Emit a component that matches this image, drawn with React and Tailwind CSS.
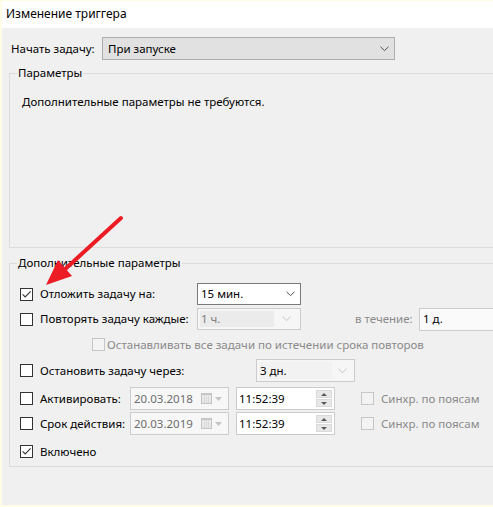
const font = { fontFamily: "'Noto Sans', 'DejaVu Sans', sans-serif" }

function Chevron({ disabled }) {
  return (
    <svg width="9" height="6" viewBox="0 0 9 6" className="shrink-0">
      <path
        d="M0.5 0.8 L4.5 4.6 L8.5 0.8"
        fill="none"
        stroke={disabled ? "#c4c4c4" : "#505050"}
        strokeWidth="1"
      />
    </svg>
  )
}

function Checkbox({ checked = false, disabled = false }) {
  return (
    <div
      className={
        disabled
          ? "w-[13px] h-[13px] shrink-0 border border-[#c6c6c6] bg-[#f3f3f3]"
          : "w-[13px] h-[13px] shrink-0 border border-[#333333] bg-white flex items-center justify-center"
      }
    >
      {checked && (
        <svg width="11" height="11" viewBox="0 0 11 11">
          <path
            d="M1.6 5.4 L4.2 8 L9.6 2.4"
            fill="none"
            stroke="#333333"
            strokeWidth="1.1"
          />
        </svg>
      )}
    </div>
  )
}

function CalendarIcon() {
  return (
    <div className="flex items-center gap-[3px] shrink-0">
      <svg width="11" height="11" viewBox="0 0 11 11">
        <rect x="0.5" y="0.5" width="10" height="10" fill="#f6f6f6" stroke="#c2c2c2" />
        <rect x="0.5" y="0.5" width="10" height="2" fill="#c8c8c8" />
        <path d="M3.5 3 V10.5 M5.5 3 V10.5 M7.5 3 V10.5 M1 5 H10 M1 7 H10 M1 9 H10" stroke="#d6d6d6" strokeWidth="0.8" />
      </svg>
      <svg width="7" height="4" viewBox="0 0 7 4">
        <path d="M0 0 H7 L3.5 4 Z" fill="#c4c4c4" />
      </svg>
    </div>
  )
}

function Spinner() {
  return (
    <div className="flex flex-col gap-[1px] shrink-0">
      <div className="w-[16px] h-[8px] bg-[#e8e8e8] border border-[#d9d9d9] flex items-center justify-center">
        <svg width="6" height="3" viewBox="0 0 6 3">
          <path d="M0 3 H6 L3 0 Z" fill="#5a5a5a" />
        </svg>
      </div>
      <div className="w-[16px] h-[8px] bg-[#e8e8e8] border border-[#d9d9d9] flex items-center justify-center">
        <svg width="6" height="3" viewBox="0 0 6 3">
          <path d="M0 0 H6 L3 3 Z" fill="#5a5a5a" />
        </svg>
      </div>
    </div>
  )
}

function RedArrow() {
  return (
    <div className="absolute inset-0 pointer-events-none">
      <svg width="493" height="507" viewBox="0 0 493 507">
        <path d="M121 218 L62 272" stroke="#ec1c24" strokeWidth="4" strokeLinecap="round" />
        <path d="M46 285 L72 276 L58 260 Z" fill="#ec1c24" />
      </svg>
    </div>
  )
}

export default function App() {
  return (
    <div
      className="relative w-[493px] h-[507px] bg-[#fffde6] pl-[2px] pt-[1px] pb-[2px] overflow-hidden text-[11.5px] leading-[16px] text-black"
      style={font}
    >
      <div className="w-[700px] h-full flex flex-col overflow-hidden">

        {/* title */}
        <div className="h-[27px] bg-white pl-[4px] pt-[5px] shrink-0 text-[12px]">
          Изменение триггера
        </div>

        {/* body */}
        <div className="flex-1 bg-[#f0f0f0] pt-[9px]">

          <div className="flex items-center pl-[9px]">
            <span className="w-[91px]">Начать задачу:</span>
            <div className="w-[293px] h-[23px] bg-[#e1e1e1] border border-[#adadad] flex items-center justify-between pl-[5px] pr-[5px]">
              <span>При запуске</span>
              <Chevron />
            </div>
          </div>

          {/* Параметры */}
          <fieldset className="mt-[5px] ml-[7px] h-[183px] border border-[#dcdcdc] pl-[7px]">
            <legend className="px-[1px]">Параметры</legend>
            <p className="pt-[13px] pl-[5px]">
              Дополнительные параметры не требуются.
            </p>
          </fieldset>

          {/* Дополнительные параметры */}
          <fieldset className="mt-[7px] ml-[7px] h-[212px] border border-[#dcdcdc] pl-[7px]">
            <legend className="px-[1px]">Дополнительные параметры</legend>

            <div className="pl-[3px] pt-[12px] flex flex-col">

              <div className="flex items-center h-[22px]">
                <div className="w-[177px] flex items-center gap-[7px]">
                  <Checkbox checked />
                  <span>Отложить задачу на:</span>
                </div>
                <div className="w-[104px] h-[22px] bg-white border border-[#7a7a7a] flex items-center justify-between pl-[3px] pr-[5px]">
                  <span>15 мин.</span>
                  <Chevron />
                </div>
              </div>

              <div className="flex items-center h-[22px] mt-[3px]">
                <div className="w-[177px] flex items-center gap-[7px]">
                  <Checkbox />
                  <span>Повторять задачу каждые:</span>
                </div>
                <div className="w-[104px] h-[22px] bg-[#f6f6f6] border border-[#cccccc] flex items-center p-[2px]">
                  <span className="flex-1 h-full bg-[#ebebeb] text-[#7c7c7c] pl-[1px] leading-[16px]">1 ч.</span>
                  <div className="w-[24px] flex justify-center">
                    <Chevron disabled />
                  </div>
                </div>
                <span className="ml-[54px] w-[64px] text-[#8a8a8a]">в течение:</span>
                <div className="w-[100px] h-[23px] bg-[#fafafa] border border-[#cccccc] pl-[3px] flex items-center">
                  1 д.
                </div>
              </div>

              <div className="flex items-center h-[15px] mt-[7px] pl-[72px] gap-[2px]">
                <Checkbox disabled />
                <span className="text-[#8a8a8a]">
                  Останавливать все задачи по истечении срока повторов
                </span>
              </div>

              <div className="flex items-center h-[23px] mt-[7px]">
                <div className="w-[236px] flex items-center gap-[7px]">
                  <Checkbox />
                  <span>Остановить задачу через:</span>
                </div>
                <div className="w-[99px] h-[23px] bg-[#f6f6f6] border border-[#cccccc] flex items-center p-[2px]">
                  <span className="flex-1 h-full bg-[#f2f2f2] pl-[1px] leading-[17px]">3 дн.</span>
                  <div className="w-[20px] flex justify-center">
                    <Chevron disabled />
                  </div>
                </div>
              </div>

              {[
                ["Активировать:", "20.03.2018", 5],
                ["Срок действия:", "20.03.2019", 2],
              ].map(([label, date, mt]) => (
                <div
                  key={label}
                  className={`flex items-center h-[23px] ${mt === 5 ? "mt-[5px]" : "mt-[2px]"}`}
                >
                  <div className="w-[110px] flex items-center gap-[7px]">
                    <Checkbox />
                    <span>{label}</span>
                  </div>
                  <div className="w-[99px] h-[23px] bg-[#f7f7f7] border border-[#cccccc] flex items-center justify-between pl-[3px] pr-[6px]">
                    <span className="text-[#6d6d6d]">{date}</span>
                    <CalendarIcon />
                  </div>
                  <div className="ml-[7px] w-[99px] h-[23px] bg-white border border-[#cccccc] flex items-center justify-between pl-[2px] pr-[2px]">
                    <span>11:52:39</span>
                    <Spinner />
                  </div>
                  <div className="ml-[26px] flex items-center gap-[7px]">
                    <Checkbox disabled />
                    <span className="text-[#8a8a8a]">Синхр. по поясам</span>
                  </div>
                </div>
              ))}

              <div className="flex items-center h-[13px] mt-[10px] gap-[7px]">
                <Checkbox checked />
                <span>Включено</span>
              </div>

            </div>
          </fieldset>

        </div>
      </div>

      <RedArrow />
    </div>
  )
}
